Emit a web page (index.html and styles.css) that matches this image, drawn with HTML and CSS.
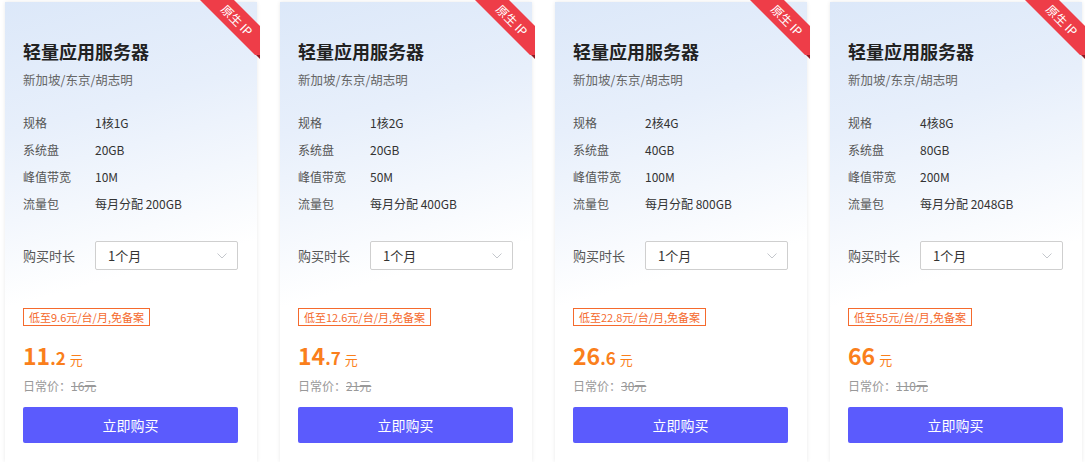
FILE: index.html
```html
<!DOCTYPE html>
<html lang="zh-CN">
<head>
<meta charset="utf-8">
<title>轻量应用服务器</title>
<link rel="stylesheet" href="styles.css">
</head>
<body>
<div class="plans">
  <div class="card">
    <div class="ribbon"><div class="band">原生 IP</div></div>
    <div class="fold"></div>
    <h2 class="title">轻量应用服务器</h2>
    <div class="region">新加坡/东京/胡志明</div>
    <dl class="specs">
      <div class="row"><dt>规格</dt><dd>1核1G</dd></div>
      <div class="row"><dt>系统盘</dt><dd>20GB</dd></div>
      <div class="row"><dt>峰值带宽</dt><dd>10M</dd></div>
      <div class="row"><dt>流量包</dt><dd>每月分配 200GB</dd></div>
    </dl>
    <div class="buy"><span class="buy-label">购买时长</span><div class="select"><span>1个月</span><svg class="chev" width="10" height="6" viewBox="0 0 10 6"><polyline points="0.5,0.5 5,5 9.5,0.5" fill="none" stroke="#c4c7cc" stroke-width="1"/></svg></div></div>
    <div class="tag">低至9.6元/台/月,免备案</div>
    <div class="price"><span class="int">11</span><span class="dec">.2</span><span class="unit">元</span></div>
    <div class="orig">日常价：<s>16元</s></div>
    <button class="btn">立即购买</button>
  </div>
  <div class="card">
    <div class="ribbon"><div class="band">原生 IP</div></div>
    <div class="fold"></div>
    <h2 class="title">轻量应用服务器</h2>
    <div class="region">新加坡/东京/胡志明</div>
    <dl class="specs">
      <div class="row"><dt>规格</dt><dd>1核2G</dd></div>
      <div class="row"><dt>系统盘</dt><dd>20GB</dd></div>
      <div class="row"><dt>峰值带宽</dt><dd>50M</dd></div>
      <div class="row"><dt>流量包</dt><dd>每月分配 400GB</dd></div>
    </dl>
    <div class="buy"><span class="buy-label">购买时长</span><div class="select"><span>1个月</span><svg class="chev" width="10" height="6" viewBox="0 0 10 6"><polyline points="0.5,0.5 5,5 9.5,0.5" fill="none" stroke="#c4c7cc" stroke-width="1"/></svg></div></div>
    <div class="tag">低至12.6元/台/月,免备案</div>
    <div class="price"><span class="int">14</span><span class="dec">.7</span><span class="unit">元</span></div>
    <div class="orig">日常价：<s>21元</s></div>
    <button class="btn">立即购买</button>
  </div>
  <div class="card">
    <div class="ribbon"><div class="band">原生 IP</div></div>
    <div class="fold"></div>
    <h2 class="title">轻量应用服务器</h2>
    <div class="region">新加坡/东京/胡志明</div>
    <dl class="specs">
      <div class="row"><dt>规格</dt><dd>2核4G</dd></div>
      <div class="row"><dt>系统盘</dt><dd>40GB</dd></div>
      <div class="row"><dt>峰值带宽</dt><dd>100M</dd></div>
      <div class="row"><dt>流量包</dt><dd>每月分配 800GB</dd></div>
    </dl>
    <div class="buy"><span class="buy-label">购买时长</span><div class="select"><span>1个月</span><svg class="chev" width="10" height="6" viewBox="0 0 10 6"><polyline points="0.5,0.5 5,5 9.5,0.5" fill="none" stroke="#c4c7cc" stroke-width="1"/></svg></div></div>
    <div class="tag">低至22.8元/台/月,免备案</div>
    <div class="price"><span class="int">26</span><span class="dec">.6</span><span class="unit">元</span></div>
    <div class="orig">日常价：<s>30元</s></div>
    <button class="btn">立即购买</button>
  </div>
  <div class="card">
    <div class="ribbon"><div class="band">原生 IP</div></div>
    <div class="fold"></div>
    <h2 class="title">轻量应用服务器</h2>
    <div class="region">新加坡/东京/胡志明</div>
    <dl class="specs">
      <div class="row"><dt>规格</dt><dd>4核8G</dd></div>
      <div class="row"><dt>系统盘</dt><dd>80GB</dd></div>
      <div class="row"><dt>峰值带宽</dt><dd>200M</dd></div>
      <div class="row"><dt>流量包</dt><dd>每月分配 2048GB</dd></div>
    </dl>
    <div class="buy"><span class="buy-label">购买时长</span><div class="select"><span>1个月</span><svg class="chev" width="10" height="6" viewBox="0 0 10 6"><polyline points="0.5,0.5 5,5 9.5,0.5" fill="none" stroke="#c4c7cc" stroke-width="1"/></svg></div></div>
    <div class="tag">低至55元/台/月,免备案</div>
    <div class="price"><span class="int">66</span><span class="unit">元</span></div>
    <div class="orig">日常价：<s>110元</s></div>
    <button class="btn">立即购买</button>
  </div>
</div>
</body>
</html>
```
FILE: styles.css
```css
html, body {
  margin: 0;
  padding: 0;
  background: #ffffff;
  overflow: hidden;
}
body {
  font-family: "Noto Sans CJK SC", "Noto Sans", "Liberation Sans", sans-serif;
  color: #333;
}
.plans {
  display: flex;
  gap: 23px;
  padding: 2px 0 0 5px;
}
.card {
  position: relative;
  box-sizing: border-box;
  width: 252px;
  height: 460px;
  padding: 37px 19px 0 18px;
  display: flex;
  flex-direction: column;
  background: linear-gradient(165deg, #dce8f9 0%, #e7effb 25%, #f3f7fd 42%, #ffffff 58%);
  box-shadow: 0 0 4px rgba(0, 0, 0, 0.09);
}
.ribbon {
  position: absolute;
  top: -2px;
  right: -3px;
  width: 63px;
  height: 55px;
  overflow: hidden;
}
.band {
  position: absolute;
  left: -20px;
  top: 8px;
  width: 120px;
  height: 24px;
  line-height: 24px;
  background: #ee3d48;
  color: #fff;
  font-size: 12px;
  text-align: center;
  transform: rotate(45deg);
}
.fold {
  position: absolute;
  top: 53px;
  right: -3px;
  width: 0;
  height: 0;
  border-left: 4px solid transparent;
  border-top: 4px solid #8f1a22;
}
.title {
  margin: 0;
  font-size: 18px;
  line-height: 24px;
  font-weight: 700;
  color: #222;
}
.region {
  margin-top: 8px;
  font-size: 12.5px;
  line-height: 18px;
  color: #666;
}
.specs {
  margin: 20px 0 0;
}
.row {
  display: flex;
  height: 27px;
  align-items: center;
  font-size: 12px;
}
.row dt {
  width: 72px;
  color: #555;
}
.row dd {
  margin: 0;
  color: #333;
}
.buy {
  margin-top: 24px;
  display: flex;
  align-items: center;
}
.buy-label {
  width: 72px;
  font-size: 13px;
  color: #555;
}
.select {
  box-sizing: border-box;
  width: 143px;
  height: 29px;
  border: 1px solid #cfcfcf;
  border-radius: 2px;
  background: #fff;
  display: flex;
  align-items: center;
  justify-content: space-between;
  padding: 0 10px 0 12px;
  font-size: 13px;
  color: #333;
}
.tag {
  align-self: flex-start;
  margin-top: 38px;
  box-sizing: border-box;
  height: 18px;
  line-height: 16px;
  padding: 0 5px;
  border: 1px solid #f56a2d;
  color: #f56a2d;
  font-size: 11px;
}
.price {
  margin-top: 14px;
  height: 30px;
  display: flex;
  align-items: baseline;
  color: #fa7f1c;
}
.price .int {
  font-size: 23px;
  font-weight: 700;
  line-height: 30px;
}
.price .dec {
  font-size: 17px;
  font-weight: 700;
}
.price .unit {
  margin-left: 4px;
  font-size: 13px;
}
.orig {
  margin-top: 7px;
  font-size: 12px;
  line-height: 18px;
  color: #999;
}
.orig s {
  color: #999;
}
.btn {
  margin-top: 12px;
  height: 36px;
  border: none;
  border-radius: 2px;
  background: #5b5bfd;
  color: #fff;
  font-family: inherit;
  font-size: 14px;
  cursor: pointer;
}
```
